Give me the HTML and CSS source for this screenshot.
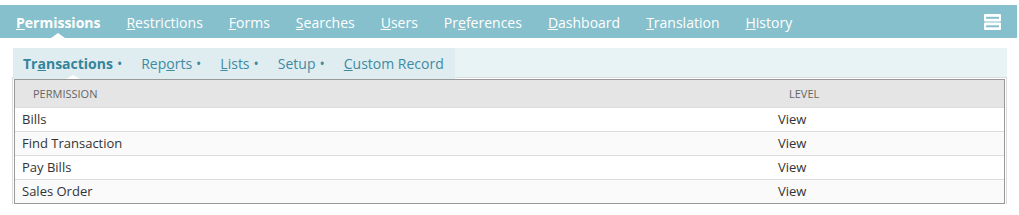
FILE: index.html
```html
<!DOCTYPE html>
<html>
<head>
	<title>Permissions</title>

	<link rel="stylesheet" href="styles.css">
</head>
<body>

<div class="topbar">
	<a href="#" class="item active"><u>P</u>ermissions</a>
	<a href="#" class="item"><u>R</u>estrictions</a>
	<a href="#" class="item"><u>F</u>orms</a>
	<a href="#" class="item"><u>S</u>earches</a>
	<a href="#" class="item"><u>U</u>sers</a>
	<a href="#" class="item">Pr<u>e</u>ferences</a>
	<a href="#" class="item"><u>D</u>ashboard</a>
	<a href="#" class="item"><u>T</u>ranslation</a>
	<a href="#" class="item"><u>H</u>istory</a>
	<a href="#" class="menu">
		<svg width="17" height="16" viewBox="0 0 17 16">
			<rect x="0" y="0" width="17" height="7.5" rx="1" fill="#fff"/>
			<rect x="2" y="2.8" width="13" height="2" fill="#86c0cd"/>
			<rect x="0" y="8.5" width="17" height="7.5" rx="1" fill="#fff"/>
			<rect x="2" y="11.3" width="13" height="2" fill="#86c0cd"/>
		</svg>
	</a>
</div>

<div class="panel">
	<div class="tabs">
		<a href="#" class="tab active">Tr<u>a</u>nsactions<span class="dot">•</span></a>
		<a href="#" class="tab">Rep<u>o</u>rts<span class="dot">•</span></a>
		<a href="#" class="tab"><u>L</u>ists<span class="dot">•</span></a>
		<a href="#" class="tab">Setup<span class="dot">•</span></a>
		<a href="#" class="tab"><u>C</u>ustom Record</a>
	</div>
</div>

<div class="grid">
	<table>
		<tr class="head">
			<th class="perm">Permission</th>
			<th class="level">Level</th>
		</tr>
		<tr>
			<td>Bills</td>
			<td>View</td>
		</tr>
		<tr class="odd">
			<td>Find Transaction</td>
			<td>View</td>
		</tr>
		<tr>
			<td>Pay Bills</td>
			<td>View</td>
		</tr>
		<tr class="odd">
			<td>Sales Order</td>
			<td>View</td>
		</tr>
	</table>
</div>

</body>
</html>
```

FILE: styles.css
```css
*{
	margin: 0;
	padding: 0;
	box-sizing: border-box;
}

body{
	padding-top: 5px;
	font-family: "Open Sans", "Liberation Sans", sans-serif;
	background: #fff;
}

a{
	text-decoration: none;
	color: inherit;
}

.topbar{
	width: 1017px;
	height: 33px;
	background: #86c0cd;
	display: flex;
	align-items: center;
	gap: 26px;
	padding: 0 16px;
	color: #fff;
	font-size: 14px;
}

.item{
	position: relative;
	height: 33px;
	display: flex;
	align-items: center;
	padding-top: 2px;
}

.item.active{
	font-weight: bold;
}

.item.active::after{
	content: "";
	position: absolute;
	bottom: 0;
	left: 50%;
	margin-left: -7px;
	border-left: 7px solid transparent;
	border-right: 7px solid transparent;
	border-bottom: 5px solid #fff;
}

.menu{
	margin-left: auto;
	display: flex;
	margin-top: 1px;
}

.panel{
	margin: 10px 12px 0 13px;
	width: 994px;
	height: 31px;
	background: #e7f3f5;
}

.tabs{
	display: inline-flex;
	height: 31px;
	align-items: center;
	gap: 19px;
	padding: 0 11px 0 10px;
	background: #dfedf1;
	color: #3e8aa1;
	font-size: 14px;
}

.tab{
	position: relative;
	height: 31px;
	display: flex;
	align-items: center;
}

.tab.active{
	font-weight: bold;
	color: #35849b;
}

.dot{
	font-size: 14px;
	margin-left: 4px;
	font-weight: normal;
}

.tab.active::after{
	content: "";
	position: absolute;
	bottom: 0;
	left: 50%;
	margin-left: -7px;
	border-left: 7px solid transparent;
	border-right: 7px solid transparent;
	border-bottom: 4px solid #fff;
}

.grid{
	margin-left: 14px;
	width: 991px;
	border: 1px solid #999;
	box-shadow: 0 0 0 1px #fff, 0 0 0 2px #dcdcdc;
}

table{
	width: 100%;
	border-collapse: collapse;
	font-size: 13px;
	color: #333;
}

.head{
	background: #e5e5e5;
}

th{
	height: 27px;
	text-align: left;
	font-weight: normal;
	font-size: 11px;
	text-transform: uppercase;
	color: #666;
	padding-left: 18px;
	padding-top: 1px;
}

th.perm{
	width: 756px;
}

td{
	height: 24px;
	padding-left: 7px;
	border-top: 1px solid #ddd;
	background: #fff;
}

.odd td{
	background: #fafafa;
}
```
